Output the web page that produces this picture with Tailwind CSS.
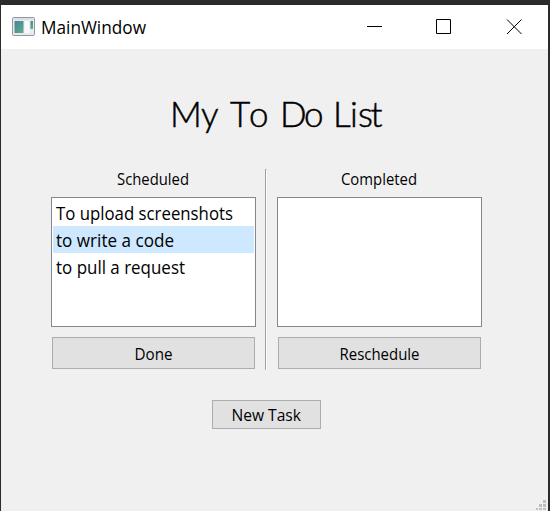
<!DOCTYPE html>
<html lang="en">
<head>
<meta charset="utf-8">
<title>MainWindow</title>
<script src="https://cdn.jsdelivr.net/npm/@tailwindcss/browser@4"></script>
</head>
<body class="h-[511px] w-[550px] overflow-hidden bg-[#2b2b2b] pt-[5px] pl-px font-['Open_Sans',sans-serif] text-black">
<div class="relative flex h-[506px] w-[547px] flex-col bg-[#f0f0f0]">
  <header class="flex h-11 shrink-0 items-center bg-white pl-[11px]">
    <svg class="-mt-0.5 h-[19px] w-[23px]" viewBox="0 0 23 19">
      <defs><linearGradient id="g" x1="0" y1="0" x2="1" y2="1"><stop offset="0" stop-color="#487f9c"/><stop offset="1" stop-color="#60b087"/></linearGradient></defs>
      <rect x=".5" y=".5" width="22" height="18" rx="1.2" fill="#e9eaed" stroke="#93989f"/>
      <path d="M1.500 2h20" stroke="#d0d4da"/>
      <rect x="2.500" y="4" width="9" height="12" fill="url(#g)"/>
      <rect x="12.500" y="4" width="5" height="12" fill="#fafafa"/>
      <rect x="18.500" y="4" width="2.500" height="8" fill="url(#g)"/>
    </svg>
    <svg class="ml-1.5 h-7 w-[110px]" viewBox="0 0 110 28"><text x="0" y="21" font-size="17.500" textLength="105" lengthAdjust="spacingAndGlyphs">MainWindow</text></svg>
    <svg class="ml-auto mr-[26px] h-4 w-[155px]" viewBox="0 0 155 16" fill="none" stroke="#000">
      <path d="M0 7.500h15M69.500 .5h14v14h-14zM140 .5l14.500 14.500M154.500 .5L140 15"/>
    </svg>
  </header>
  <main class="flex flex-col items-center pr-4 pt-[38px]">
    <h1 class="ml-[22px] h-[60px] w-[220px]">
      <svg class="h-[60px] w-[220px]" viewBox="0 0 220 60" font-family="Lato, sans-serif" font-weight="300" font-size="35" stroke="#000" stroke-width=".5">
        <text y="39.500" x="2 33 42 62 81 97 112 136 153 165 182 190 202.500">My To Do List</text>
      </svg>
    </h1>
    <div class="flex h-[223px] items-start pt-[22px]">
      <section class="flex w-[205px] flex-col items-center">
        <svg class="h-7 w-[205px]" viewBox="0 0 205 28"><text x="66" y="16" font-size="16" textLength="72" lengthAdjust="spacingAndGlyphs">Scheduled</text></svg>
        <ul class="h-[130px] w-[205px] border border-[#828790] bg-white p-px">
          <li class="h-[27px]"><svg class="h-[27px] w-[201px]"><text x="3" y="21" font-size="17.500" textLength="177" lengthAdjust="spacingAndGlyphs">To upload screenshots</text></svg></li>
          <li class="h-[27px] bg-[#cde8ff]"><svg class="h-[27px] w-[201px]"><text x="3" y="21" font-size="17.500" textLength="118" lengthAdjust="spacingAndGlyphs">to write a code</text></svg></li>
          <li class="h-[27px]"><svg class="h-[27px] w-[201px]"><text x="3" y="21" font-size="17.500" textLength="129" lengthAdjust="spacingAndGlyphs">to pull a request</text></svg></li>
        </ul>
        <button class="mt-[10px] h-8 w-[203px] border border-[#adadad] bg-[#e1e1e1]"><svg class="h-[30px] w-[201px]"><text x="81.500" y="22" font-size="16" textLength="38" lengthAdjust="spacingAndGlyphs">Done</text></svg></button>
      </section>
      <div class="ml-[9px] mr-[10px] h-[201px] w-0.5 border-l border-t border-r border-[#a0a0a0] border-r-white"></div>
      <section class="flex w-[205px] flex-col items-center">
        <svg class="h-7 w-[205px]" viewBox="0 0 205 28"><text x="64" y="16" font-size="16" textLength="76" lengthAdjust="spacingAndGlyphs">Completed</text></svg>
        <ul class="h-[130px] w-[205px] border border-[#828790] bg-white"></ul>
        <button class="mt-[10px] h-8 w-[203px] border border-[#adadad] bg-[#e1e1e1]"><svg class="h-[30px] w-[201px]"><text x="60.500" y="22" font-size="16" textLength="80" lengthAdjust="spacingAndGlyphs">Reschedule</text></svg></button>
      </section>
    </div>
    <button class="mt-[30px] h-[29px] w-[109px] border border-[#adadad] bg-[#e1e1e1]"><svg class="h-[27px] w-[107px]"><text x="18.500" y="20" font-size="16" textLength="69.500" lengthAdjust="spacingAndGlyphs">New Task</text></svg></button>
  </main>
  <svg class="absolute right-px bottom-0 h-[12px] w-[12px]" fill="#bfbfbf"><path d="M8 1h3v3H8zM4 5h3v3H4zM8 5h3v3H8zM1 9h2v2H1zM4 9h3v2H4zM8 9h3v2H8z"/></svg>
</div>
</body>
</html>
